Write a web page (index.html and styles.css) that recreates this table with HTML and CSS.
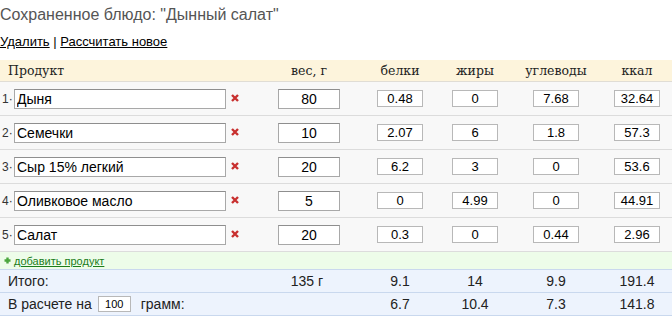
FILE: index.html
```html
<!DOCTYPE html>
<html lang="ru">
<head>
<meta charset="utf-8">
<title>Сохраненное блюдо</title>
<link rel="stylesheet" href="styles.css">
</head>
<body>
<h1 class="title">Сохраненное блюдо: "Дынный салат"</h1>
<div class="actions"><a href="#">Удалить</a> | <a href="#">Рассчитать новое</a></div>

<div class="calc">
  <div class="row head">
    <div class="c-prod">Продукт</div>
    <div class="c-num">вес, г</div>
    <div class="c-num">белки</div>
    <div class="c-num">жиры</div>
    <div class="c-num">углеводы</div>
    <div class="c-num">ккал</div>
  </div>

  <div class="row item">
    <div class="c-prod"><span class="idx">1·</span><input class="name" value="Дыня"><svg class="del" viewBox="0 0 8 8"><path d="M1 1L7 7M7 1L1 7"/></svg></div>
    <div class="c-num"><input class="weight" value="80"></div>
    <div class="c-num"><input class="nut" value="0.48"></div>
    <div class="c-num"><input class="nut" value="0"></div>
    <div class="c-num"><input class="nut" value="7.68"></div>
    <div class="c-num"><input class="nut" value="32.64"></div>
  </div>
  <div class="row item">
    <div class="c-prod"><span class="idx">2·</span><input class="name" value="Семечки"><svg class="del" viewBox="0 0 8 8"><path d="M1 1L7 7M7 1L1 7"/></svg></div>
    <div class="c-num"><input class="weight" value="10"></div>
    <div class="c-num"><input class="nut" value="2.07"></div>
    <div class="c-num"><input class="nut" value="6"></div>
    <div class="c-num"><input class="nut" value="1.8"></div>
    <div class="c-num"><input class="nut" value="57.3"></div>
  </div>
  <div class="row item">
    <div class="c-prod"><span class="idx">3·</span><input class="name" value="Сыр 15% легкий"><svg class="del" viewBox="0 0 8 8"><path d="M1 1L7 7M7 1L1 7"/></svg></div>
    <div class="c-num"><input class="weight" value="20"></div>
    <div class="c-num"><input class="nut" value="6.2"></div>
    <div class="c-num"><input class="nut" value="3"></div>
    <div class="c-num"><input class="nut" value="0"></div>
    <div class="c-num"><input class="nut" value="53.6"></div>
  </div>
  <div class="row item">
    <div class="c-prod"><span class="idx">4·</span><input class="name" value="Оливковое масло"><svg class="del" viewBox="0 0 8 8"><path d="M1 1L7 7M7 1L1 7"/></svg></div>
    <div class="c-num"><input class="weight" value="5"></div>
    <div class="c-num"><input class="nut" value="0"></div>
    <div class="c-num"><input class="nut" value="4.99"></div>
    <div class="c-num"><input class="nut" value="0"></div>
    <div class="c-num"><input class="nut" value="44.91"></div>
  </div>
  <div class="row item">
    <div class="c-prod"><span class="idx">5·</span><input class="name" value="Салат"><svg class="del" viewBox="0 0 8 8"><path d="M1 1L7 7M7 1L1 7"/></svg></div>
    <div class="c-num"><input class="weight" value="20"></div>
    <div class="c-num"><input class="nut" value="0.3"></div>
    <div class="c-num"><input class="nut" value="0"></div>
    <div class="c-num"><input class="nut" value="0.44"></div>
    <div class="c-num"><input class="nut" value="2.96"></div>
  </div>

  <div class="add">
    <svg class="plus" viewBox="0 0 7 7"><path d="M3.5 0.5V6.5M0.5 3.5H6.5"/></svg>
    <a href="#">добавить продукт</a>
  </div>

  <div class="row total">
    <div class="c-prod">Итого:</div>
    <div class="c-weight">135 г</div>
    <div class="c-num">9.1</div>
    <div class="c-num">14</div>
    <div class="c-num">9.9</div>
    <div class="c-num">191.4</div>
  </div>
  <div class="row total">
    <div class="c-prod">В расчете на <input class="per" value="100"> грамм:</div>
    <div class="c-weight"></div>
    <div class="c-num">6.7</div>
    <div class="c-num">10.4</div>
    <div class="c-num">7.3</div>
    <div class="c-num">141.8</div>
  </div>
</div>
</body>
</html>
```

FILE: styles.css
```css
html, body {
  margin: 0;
  padding: 0;
  background: #fff;
}
body {
  font-family: "Liberation Sans", Arial, sans-serif;
  color: #222;
}
.title {
  margin: 0;
  padding-top: 5px;
  font-size: 16px;
  line-height: 20px;
  font-weight: normal;
  color: #555;
}
.actions {
  margin-top: 9px;
  font-size: 13px;
  line-height: 16px;
  color: #000;
}
.actions a {
  color: #000;
  text-decoration: underline;
}
.calc {
  margin-top: 10px;
}
.row {
  display: grid;
  grid-template-columns: 268px 82px 100px 50px 112px 50px 1fr;
  align-items: center;
}
.c-num {
  text-align: center;
  display: flex;
  justify-content: center;
  align-items: center;
}
.head {
  height: 21px;
  background: #fdf4dc;
  border-bottom: 1px solid #e0ddd5;
  font-family: "DejaVu Serif", Georgia, serif;
  font-size: 12.5px;
  color: #222;
}
.head .c-prod {
  padding-left: 8px;
}
.item {
  height: 33px;
  background: #f8f8f8;
  border-bottom: 1px solid #dcdcdc;
}
.item .c-prod {
  display: flex;
  align-items: center;
}
.idx {
  width: 12px;
  padding-left: 2px;
  font-size: 12px;
  color: #333;
}
input {
  box-sizing: border-box;
  margin: 0;
  font-family: "Liberation Sans", Arial, sans-serif;
  color: #000;
  background: #fff;
  border: 1px solid #a8a8a8;
  border-top-color: #8e8e8e;
  outline: none;
  border-radius: 0;
}
.name {
  width: 212px;
  height: 20px;
  padding: 0 2px;
  font-size: 14px;
}
.del {
  width: 8px;
  height: 8px;
  margin-left: 5px;
  margin-top: -2px;
}
.del path {
  stroke: #c8302f;
  stroke-width: 2.4;
  fill: none;
}
.weight {
  width: 62px;
  height: 20px;
  text-align: center;
  font-size: 14px;
  padding: 0;
}
.nut {
  width: 46px;
  height: 17px;
  text-align: center;
  font-size: 13px;
  padding: 0;
  border-color: #b8b8b8;
}
.add {
  height: 17px;
  background: #edfce9;
  border-bottom: 1px solid #c9d8ee;
  display: flex;
  align-items: center;
  font-size: 11px;
}
.plus {
  width: 7px;
  height: 7px;
  margin-left: 4px;
  margin-right: 3px;
}
.plus path {
  stroke: #4aa63d;
  stroke-width: 2.4;
  fill: none;
}
.add a {
  color: #1b7d1b;
  text-decoration: underline;
}
.total {
  height: 22px;
  background: #edf3fd;
  border-bottom: 1px solid #c9d8ee;
  font-size: 14px;
  color: #222;
}
.total .c-prod {
  padding-left: 8px;
  display: flex;
  align-items: center;
}
.c-weight {
  text-align: right;
  padding-right: 27px;
}
.per {
  width: 33px;
  height: 16px;
  font-size: 11px;
  text-align: center;
  padding: 0;
  margin: 0 10px 0 6px;
  border-color: #b8b8b8;
}
```
